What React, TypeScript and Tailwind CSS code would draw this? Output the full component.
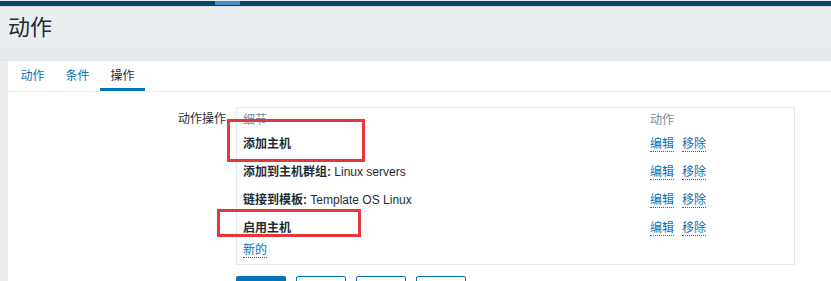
import React from "react";

const font = { fontFamily: '"Liberation Sans", "Noto Sans CJK SC", sans-serif' };

type Row = { label: string; value?: string };

const rows: Row[] = [
  { label: "添加主机" },
  { label: "添加到主机群组:", value: "Linux servers" },
  { label: "链接到模板:", value: "Template OS Linux" },
  { label: "启用主机" },
];

function LinkText({ children }: { children: React.ReactNode }) {
  return (
    <span className="text-[#0275b8] border-b border-dotted border-[#0275b8] leading-[14px]">
      {children}
    </span>
  );
}

export default function App() {
  return (
    <div className="relative w-[831px] h-[281px] overflow-hidden bg-[#ebeef0] text-[12px] text-[#1f2c33]" style={font}>
      {/* top nav strip */}
      <div className="h-[5px] bg-[#0a466a]">
        <div className="ml-[215px] mt-[1px] w-[25px] h-[4px] bg-[#4a8fc6]" />
      </div>
      <div className="h-px bg-[#cfe2ec]" />

      {/* page title */}
      <div className="h-[42px] flex items-center pl-2">
        <h1 className="text-[22px] leading-none font-normal">动作</h1>
      </div>
      <div className="h-[12px] bg-[#e6eaed] border-t border-[#e0e5e8] border-b border-b-[#dde2e5]" />

      {/* panel */}
      <div className="ml-2 bg-white h-[221px]">
        {/* tabs */}
        <div className="h-[31px] flex pl-[2px] border-b border-[#ebeef0]">
          <div className="w-[45px] flex items-center justify-center text-[#0275b8]">动作</div>
          <div className="w-[45px] flex items-center justify-center text-[#0275b8]">条件</div>
          <div className="w-[45px] flex items-center justify-center border-b-[3px] border-[#0275b8] pt-[3px]">操作</div>
        </div>

        {/* form row */}
        <div className="flex pt-[15px]">
          <div className="w-[218px] text-right leading-[22px] pt-px">动作操作</div>
          <div className="ml-[10px] w-[559px]">
            <div className="border border-[#e6e9eb] h-[158px] pl-[6px]">
              <div className="flex h-[22px] items-center text-[#768d99] pt-[2px]">
                <div className="w-[407px]">细节</div>
                <div>动作</div>
              </div>
              {rows.map((r) => (
                <div key={r.label} className="flex h-[28px] items-center">
                  <div className="w-[407px]">
                    <span className="font-bold">{r.label}</span>
                    {r.value && <span> {r.value}</span>}
                  </div>
                  <div className="flex gap-[8px]">
                    <LinkText>编辑</LinkText>
                    <LinkText>移除</LinkText>
                  </div>
                </div>
              ))}
              <div className="h-[16px] flex items-center">
                <LinkText>新的</LinkText>
              </div>
            </div>
            {/* buttons */}
            <div className="flex gap-[10px] mt-[11px]">
              <div className="w-[50px] h-[24px] rounded-[2px] bg-[#0275b8]" />
              <div className="w-[50px] h-[24px] rounded-[2px] border border-[#0275b8] bg-white" />
              <div className="w-[50px] h-[24px] rounded-[2px] border border-[#0275b8] bg-white" />
              <div className="w-[50px] h-[24px] rounded-[2px] border border-[#0275b8] bg-white" />
            </div>
          </div>
        </div>
      </div>

      {/* annotation boxes */}
      <div className="absolute left-[227px] top-[119px] w-[138px] h-[43px] border-[3px] border-[#e5383b]" />
      <div className="absolute left-[217px] top-[209px] w-[144px] h-[28px] border-[3px] border-[#e5383b]" />
    </div>
  );
}
